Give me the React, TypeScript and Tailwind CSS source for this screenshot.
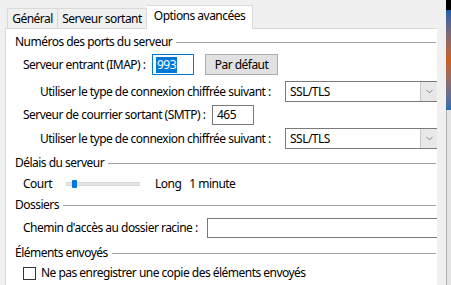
import { ChevronDown } from "lucide-react";

const font = { fontFamily: '"Noto Sans", "Open Sans", sans-serif' };

function GroupHeader({ label, className }: { label: string; className: string }) {
	return (
		<div className={`flex items-center h-[18px] pl-[9px] ${className}`}>
			<span className="whitespace-nowrap">{label}</span>
			<div className="flex-1 h-px bg-[#a0a0a0] ml-[4px] mr-px" />
		</div>
	);
}

function Select({ className }: { className: string }) {
	return (
		<div className={`flex-1 flex items-stretch border border-[#7a7a7a] border-r-0 bg-white ${className}`}>
			<span className="flex-1 flex items-center pl-[4px]">SSL/TLS</span>
			<div className="w-[17px] flex items-center justify-center bg-[#e8e8e8] border-l border-[#c8c8c8]">
				<ChevronDown className="w-[11px] h-[11px] text-[#606060]" strokeWidth={1.5} />
			</div>
		</div>
	);
}

export default function App() {
	return (
		<div className="w-[451px] h-[285px] flex overflow-hidden bg-[#f0f0f0] text-[12px] tracking-[-0.52px] text-black leading-none" style={font}>
			{/* Dialog */}
			<div className="w-[446px] flex flex-col">
				{/* Tabs */}
				<div className="h-[28px] flex items-end pl-[7px]">
					<div className="h-[20px] w-[51px] flex items-center justify-center border border-b-0 border-[#d9d9d9] bg-[#f0f0f0]">
						Général
					</div>
					<div className="h-[20px] w-[89px] flex items-center justify-center border border-b-0 border-l-0 border-[#d9d9d9] bg-[#f0f0f0]">
						Serveur sortant
					</div>
					<div className="h-[24px] w-[106px] flex items-center justify-center border border-b-0 border-l-0 border-[#d9d9d9] bg-white -mb-px relative pb-[3px]">
						Options avancées
					</div>
				</div>

				{/* Panel */}
				<div className="flex-1 ml-[5px] w-[432px] bg-white border-t border-l border-[#d9d9d9] flex flex-col">
					<GroupHeader label="Numéros des ports du serveur" className="mt-[4px]" />

					<div className="flex items-center h-[23px] mt-[2px] pl-[17px]">
						<span className="w-[129px] shrink-0 whitespace-nowrap">Serveur entrant (IMAP) :</span>
						<div className="w-[42px] h-[21px] border border-[#0078d7] flex items-center pl-[3px]">
							<span className="bg-[#0078d7] text-white px-px py-[2px]">993</span>
						</div>
						<button className="ml-[11px] w-[73px] h-[21px] bg-[#e1e1e1] border border-[#adadad] flex items-center justify-center">
							Par défaut
						</button>
					</div>

					<div className="flex items-center h-[23px] mt-[4px] pl-[34px]">
						<span className="w-[245px] shrink-0 whitespace-nowrap">Utiliser le type de connexion chiffrée suivant :</span>
						<Select className="h-[21px]" />
					</div>

					<div className="flex items-center h-[22px] mt-px pl-[17px]">
						<span className="w-[189px] shrink-0 whitespace-nowrap">Serveur de courrier sortant (SMTP) :</span>
						<div className="w-[42px] h-[20px] border border-[#7a7a7a] flex items-center pl-[4px]">465</div>
					</div>

					<div className="flex items-center h-[23px] mt-px pl-[34px]">
						<span className="w-[245px] shrink-0 whitespace-nowrap">Utiliser le type de connexion chiffrée suivant :</span>
						<Select className="h-[21px]" />
					</div>

					<GroupHeader label="Délais du serveur" className="mt-[4px]" />

					<div className="flex items-center h-[20px] mt-[2px] pl-[17px]">
						<span className="w-[43px] shrink-0">Court</span>
						<div className="relative w-[74px] h-[4px] bg-[#e7e7e7] border border-[#d6d6d6]">
							<div className="absolute left-[5px] -top-[3px] w-[5px] h-[8px] bg-[#0078d7] rounded-[1px]" />
						</div>
						<span className="ml-[15px]">Long</span>
						<span className="ml-[8px]">1 minute</span>
					</div>

					<GroupHeader label="Dossiers" className="mt-[2px]" />

					<div className="flex items-center h-[22px] mt-[3px] pl-[17px]">
						<span className="w-[184px] shrink-0 whitespace-nowrap">Chemin d'accès au dossier racine :</span>
						<div className="flex-1 h-[20px] border border-[#7a7a7a] border-r-0" />
					</div>

					<GroupHeader label="Éléments envoyés" className="mt-[5px]" />

					<div className="flex items-center h-[20px] mt-px pl-[17px]">
						<div className="w-[13px] h-[13px] shrink-0 border border-[#333333] bg-white" />
						<span className="ml-[5px] whitespace-nowrap">Ne pas enregistrer une copie des éléments envoyés</span>
					</div>
				</div>
			</div>

			{/* Background window peeking through */}
			<div className="w-[5px] flex flex-col">
				<div className="h-[10px] bg-black" />
				<div className="h-[100px] bg-gradient-to-b from-[#1d5ea8] via-[#c8601e] to-[#2a6cb0]" />
				<div className="flex-1 bg-[#e4e4e4] border-l border-[#b0b0b0]" />
			</div>
		</div>
	);
}
